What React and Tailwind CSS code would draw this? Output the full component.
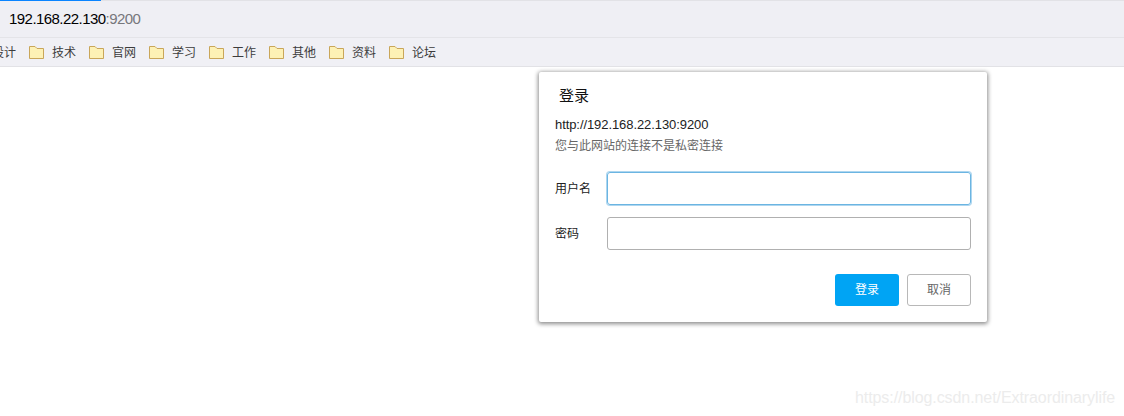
import React from "react";

const cjk = { fontFamily: '"Liberation Sans", "Noto Sans CJK SC", sans-serif' };

function Folder() {
  return (
    <svg width="15" height="13" viewBox="0 0 15 13" className="shrink-0">
      <path d="M0.5 0.5 H6 L8 2.5 H14.5 V12.5 H0.5 Z" fill="#fdf1b5" stroke="#c9a65a" strokeWidth="1" strokeLinejoin="round" />
    </svg>
  );
}

const marks = ["技术", "官网", "学习", "工作", "其他", "资料", "论坛"];

export default function App() {
  return (
    <div className="relative w-[1124px] h-[416px] bg-white overflow-hidden" style={cjk}>
      <div className="h-[38px] bg-[#efeff4] border-b border-[#e4e4e8] relative flex items-center pl-[9px] pt-[2px]">
        <div className="absolute left-0 top-0 w-full h-[1px] bg-[#e2e2e6]" />
        <div className="absolute left-0 top-0 w-[101px] h-[1px] bg-[#0a84ff]" />
        <span className="text-[15px] text-black tracking-[-0.55px]">192.168.22.130<span className="text-[#77777c]">:9200</span></span>
      </div>
      <div className="h-[29px] bg-[#f0f0f5] border-b border-[#e2e2e6] flex items-center text-[12px] text-[#3c3c3c] ml-[-8px] pt-[1px]">
        <span className="w-[37px] shrink-0">设计</span>
        {marks.map((m) => (
          <div key={m} className="w-[60px] shrink-0 flex items-center gap-[8px]">
            <Folder />
            <span>{m}</span>
          </div>
        ))}
      </div>

      <div className="absolute left-[539px] top-[72px] w-[448px] h-[250px] bg-white rounded-[2px] shadow-[0_1px_4px_1px_rgba(0,0,0,0.45)] pl-[16px] pr-[16px] flex flex-col">
        <div className="text-[15px] text-[#111] pl-[4px] pt-[14px] leading-[20px]">登录</div>
        <div className="text-[13px] text-[#222] mt-[10px] leading-[18px] tracking-[-0.08px]">http://192.168.22.130:9200</div>
        <div className="text-[12px] text-[#666] mt-[3px] leading-[18px]">您与此网站的连接不是私密连接</div>
        <div className="flex items-center mt-[17px]">
          <span className="w-[52px] text-[12px] text-[#222]">用户名</span>
          <div className="w-[364px] h-[33px] rounded-[3px] border border-[#6bb5e2] shadow-[0_0_0_1px_rgba(107,181,226,0.55)]" />
        </div>
        <div className="flex items-center mt-[12px]">
          <span className="w-[52px] text-[12px] text-[#222]">密码</span>
          <div className="w-[364px] h-[33px] rounded-[3px] border border-[#b0b0b0]" />
        </div>
        <div className="flex justify-end gap-[8px] mt-[24px] text-[12px]">
          <div className="w-[64px] h-[32px] rounded-[3px] bg-[#00a4f4] text-white flex items-center justify-center">登录</div>
          <div className="w-[64px] h-[32px] rounded-[3px] border border-[#b8b8b8] text-[#666] flex items-center justify-center">取消</div>
        </div>
      </div>

      <div className="absolute left-[855px] top-[388px] text-[16px] text-[#ececec] leading-[20px] whitespace-nowrap tracking-[-0.08px]">https://blog.csdn.net/Extraordinarylife</div>
    </div>
  );
}
